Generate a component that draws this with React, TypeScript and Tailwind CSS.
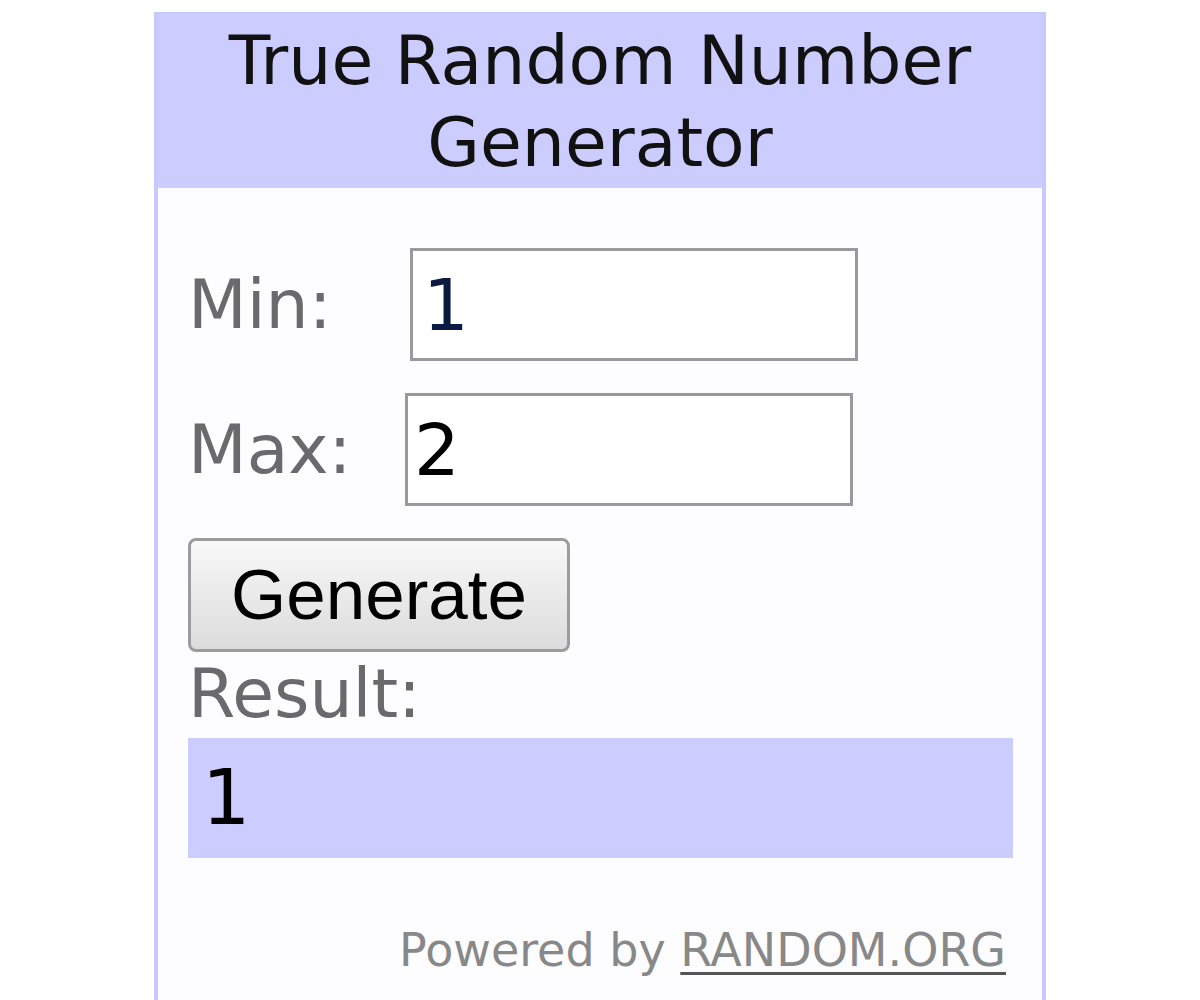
export default function App() {
  return (
    <div className="min-h-screen bg-white">
      <div className="mx-auto mt-[12px] h-[988px] w-[892px] border-x-4 border-t-2 border-[#c8c8ff] bg-[#fdfdff]">
        <header
          className="flex h-[174px] flex-col items-center bg-[#ccccff] pt-[6px] text-[68px] leading-[82px] text-[#111111]"
          style={{ fontFamily: '"DejaVu Sans", Verdana, sans-serif' }}
        >
          <span>True Random Number</span>
          <span>Generator</span>
        </header>

        <div
          className="flex flex-col pl-[30px] pr-[30px]"
          style={{ fontFamily: '"DejaVu Sans", Verdana, sans-serif' }}
        >
          <div className="mt-[60px] flex items-center">
            <span className="w-[222px] text-[68px] text-[#6a6a6a]">Min:</span>
            <div className="flex h-[113px] w-[448px] items-center border-[3px] border-[#9a9a9a] bg-white pl-[10px] text-[72px] text-[#0a1a40]">
              1
            </div>
          </div>

          <div className="mt-[32px] flex items-center">
            <span className="w-[217px] text-[68px] text-[#6a6a6a]">Max:</span>
            <div className="flex h-[113px] w-[448px] items-center border-[3px] border-[#9a9a9a] bg-white pl-[6px] text-[72px] text-black">
              2
            </div>
          </div>

          <button
            className="mt-[32px] flex h-[114px] w-[382px] items-center justify-center rounded-[8px] border-[3px] border-[#9c9c9c] bg-gradient-to-b from-[#f8f8f8] to-[#dcdcdc] text-[71px] text-black"
            style={{ fontFamily: '"Liberation Sans", Arial, sans-serif' }}
          >
            Generate
          </button>

          <span className="mt-[2px] text-[68px] leading-[80px] text-[#6a6a6a]">Result:</span>

          <div className="mt-[4px] flex h-[120px] w-[825px] items-center bg-[#ccccff] pl-[14px] text-[76px] text-black">
            1
          </div>

          <div className="mt-[58px] flex justify-end pr-[6px] text-[46px] text-[#888888]">
            <span>Powered by&nbsp;</span>
            <span className="underline decoration-[#555] decoration-[3px] underline-offset-[6px]">RANDOM.ORG</span>
          </div>
        </div>
      </div>
    </div>
  );
}
